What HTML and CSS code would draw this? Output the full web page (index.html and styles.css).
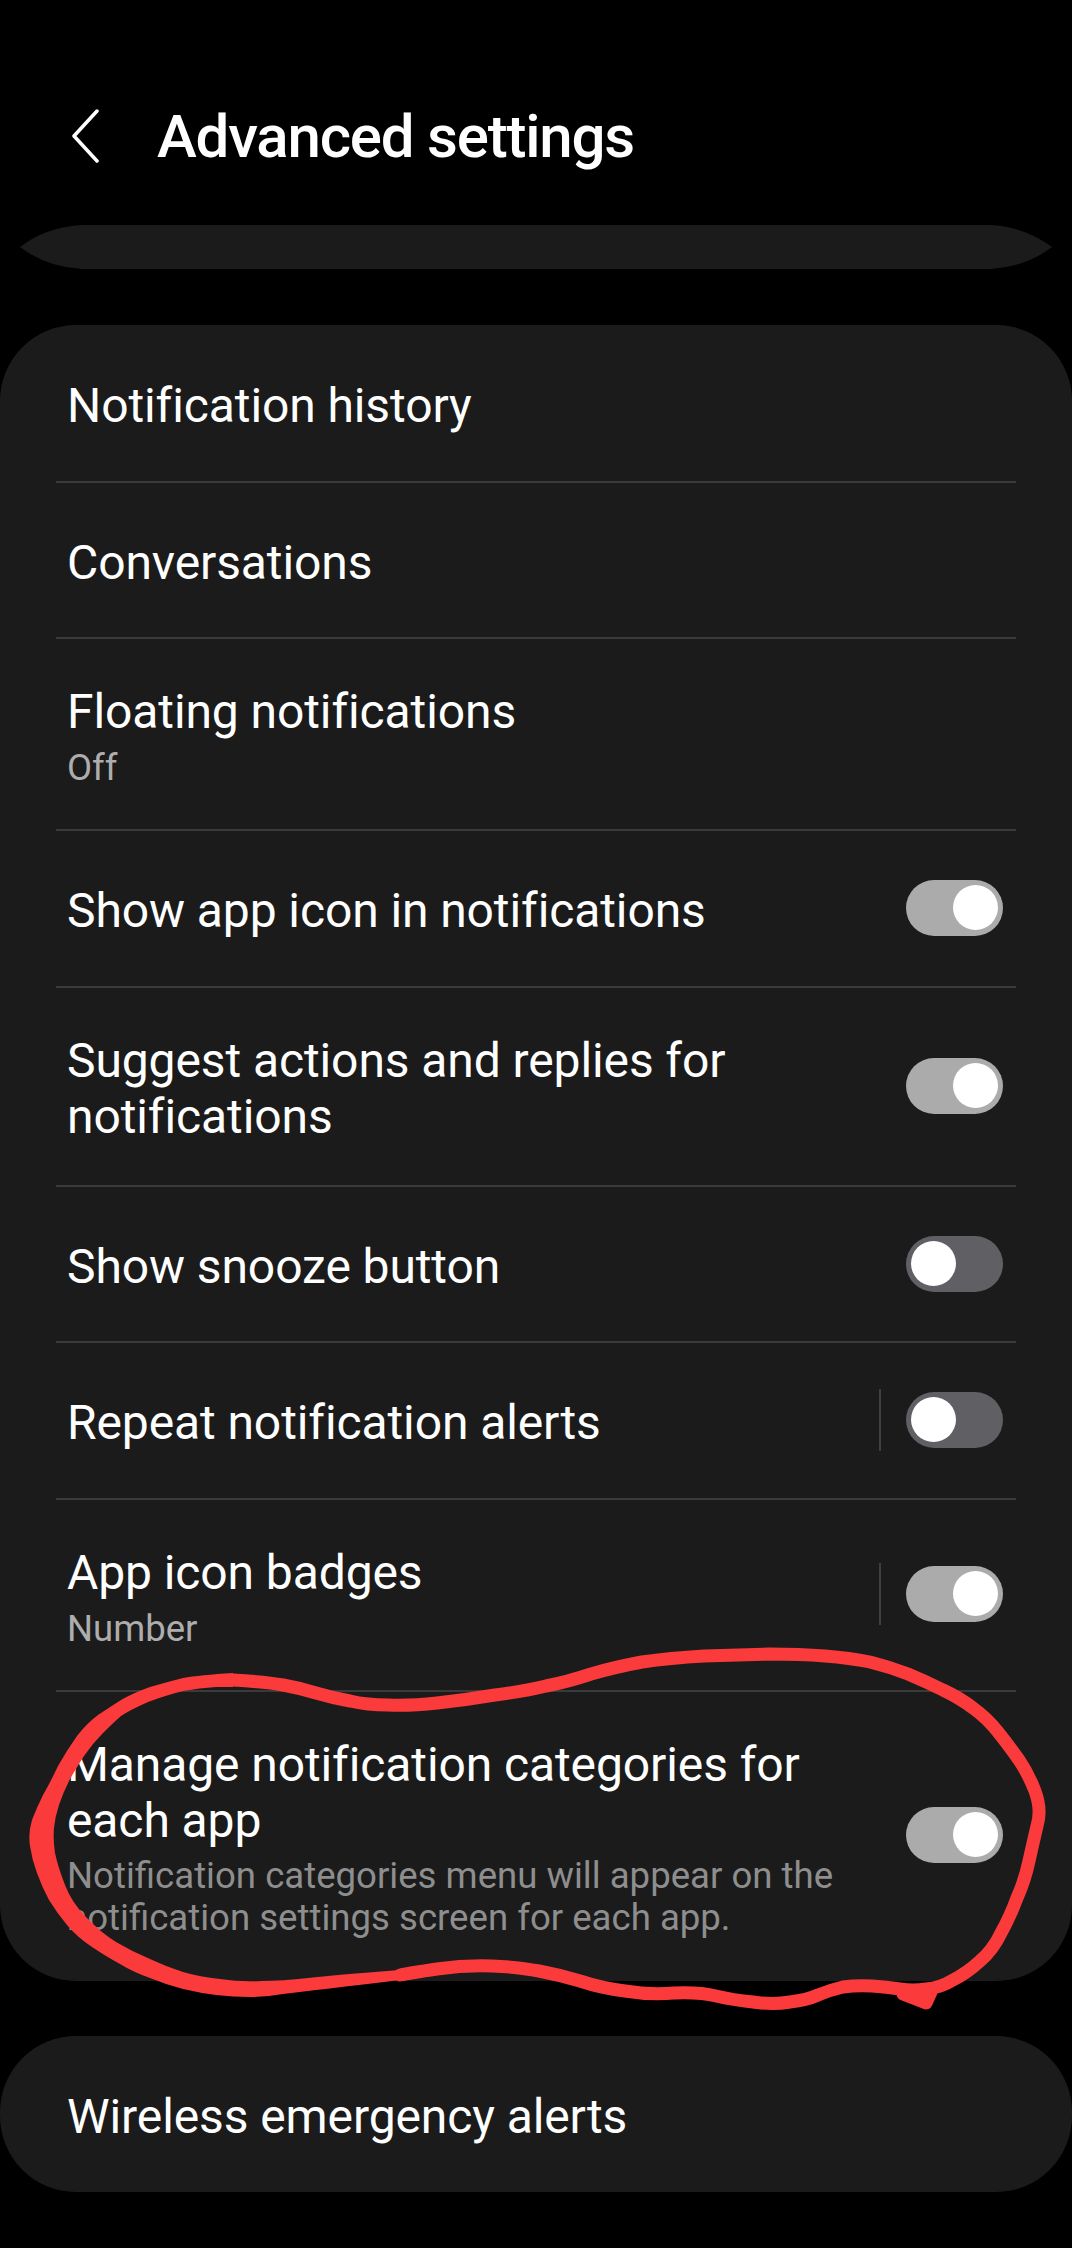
FILE: index.html
```html
<!DOCTYPE html>
<html lang="en">
<head>
    <meta charset="UTF-8">
    <title>Advanced settings</title>
    <link rel="stylesheet" href="styles.css">
</head>
<body>

<div class="screen">
    <div class="header">
        <svg class="back" width="30" height="54" viewBox="0 0 30 54">
            <path d="M27 2 L4 27 L27 52" fill="none" stroke="#fff" stroke-width="3.5" stroke-linecap="round" stroke-linejoin="round"/>
        </svg>
        <h1>Advanced settings</h1>
    </div>

    <svg class="sliver" width="1032" height="44" viewBox="0 0 1032 44">
        <path d="M0 22 Q26 2 62 0 H970 Q1006 2 1032 22 Q1006 42 970 44 H62 Q26 42 0 22 Z" fill="#1b1b1b"/>
    </svg>

    <div class="card">
        <div class="row"><div class="text"><div class="title">Notification history</div></div></div>
        <div class="row"><div class="text"><div class="title">Conversations</div></div></div>
        <div class="row row-sub">
            <div class="text">
                <div class="title">Floating notifications</div>
                <div class="sub">Off</div>
            </div>
        </div>
        <div class="row">
            <div class="text"><div class="title">Show app icon in notifications</div></div>
            <div class="toggle on"></div>
        </div>
        <div class="row">
            <div class="text"><div class="title">Suggest actions and replies for notifications</div></div>
            <div class="toggle on"></div>
        </div>
        <div class="row">
            <div class="text"><div class="title">Show snooze button</div></div>
            <div class="toggle"></div>
        </div>
        <div class="row">
            <div class="text"><div class="title">Repeat notification alerts</div></div>
            <div class="vline"></div>
            <div class="toggle"></div>
        </div>
        <div class="row row-sub">
            <div class="text">
                <div class="title">App icon badges</div>
                <div class="sub">Number</div>
            </div>
            <div class="vline"></div>
            <div class="toggle on"></div>
        </div>
        <div class="row row-sub row-desc">
            <div class="text">
                <div class="title">Manage notification categories for each app</div>
                <div class="desc">Notification categories menu will appear on the notification settings screen for each app.</div>
            </div>
            <div class="toggle on"></div>
        </div>
    </div>

    <div class="card card-last">
        <div class="row"><div class="text"><div class="title">Wireless emergency alerts</div></div></div>
    </div>

    <!-- red marker circled by hand over the screenshot -->
    <svg class="marker" viewBox="0 0 1072 2248">
        <path class="marker-line" d="M233,1680 Q267,1682 283,1685 Q300,1688 316,1693 Q333,1698 350,1701 Q367,1705 388,1705 Q410,1706 437,1703 Q465,1700 495,1695 Q526,1691 546,1686 Q567,1682 591,1674 Q615,1667 642,1662 Q670,1658 704,1656 Q738,1655 769,1654 Q800,1654 825,1656 Q850,1658 870,1662 Q890,1667 908,1674 Q927,1682 943,1690 Q960,1698 973,1708 Q987,1718 998,1732 Q1010,1747 1019,1760 Q1028,1773 1035,1791 Q1042,1810 1037,1826 Q1033,1843 1029,1861 Q1025,1880 1017,1898 Q1010,1917 1001,1933 Q993,1950 980,1961 Q967,1973 953,1980 Q940,1988 926,1989 Q913,1991 900,1989 Q887,1987 872,1986 Q857,1985 843,1987 Q830,1990 818,1995 Q807,2000 790,2002 Q773,2005 753,2002 Q733,2000 716,1996 Q700,1992 674,1993 Q649,1995 625,1991 Q601,1988 580,1981 Q560,1975 539,1971 Q519,1967 492,1966 Q465,1965 437,1969 Q410,1973 400,1975"/>
        <path class="marker-line" d="M903,1994 L926,2003 L931,1992"/>
        <path class="marker-fill" d="M233,1673 Q200,1675 183,1678 Q167,1682 150,1687 Q133,1693 121,1700 Q110,1707 98,1715 Q87,1723 77,1736 Q67,1750 58,1766 Q50,1783 43,1795 Q37,1807 32,1820 Q28,1833 30,1846 Q32,1860 37,1873 Q42,1887 49,1900 Q57,1913 67,1925 Q77,1937 92,1947 Q107,1957 120,1964 Q133,1972 150,1978 Q167,1985 183,1989 Q200,1993 216,1995 Q233,1997 250,1997 Q267,1997 283,1994 Q300,1992 316,1990 Q333,1988 400,1980 L400,1970 Q333,1975 308,1978 Q283,1981 261,1981 Q240,1982 220,1979 Q200,1977 183,1972 Q167,1967 150,1959 Q133,1952 116,1942 Q100,1932 86,1917 Q72,1903 65,1885 Q58,1867 55,1853 Q53,1840 54,1828 Q55,1817 59,1805 Q63,1793 69,1781 Q75,1770 84,1756 Q93,1743 103,1733 Q113,1723 121,1716 Q130,1710 148,1702 Q167,1695 183,1691 Q200,1688 216,1687 L233,1687 Z"/>
    </svg>
</div>

</body>
</html>
```

FILE: styles.css
```css
/* page */
body {
    margin: 0;
    background-color: #000000;
    font-family: Roboto, "Liberation Sans", sans-serif;
    color: #ffffff;
}

.screen {
    position: relative;
    width: 1072px;
    height: 2248px;
    overflow: hidden;
}

/* header */
.header {
    display: flex;
    align-items: center;
    height: 225px;
    box-sizing: border-box;
    padding: 47px 0 0 70px;
}

.back {
    margin-right: 57px;
}

h1 {
    margin: 0;
    font-size: 60px;
    font-weight: 500;
    letter-spacing: -1.2px;
}

/* the piece of a card scrolled away under the header */
.sliver {
    display: block;
    margin: 0 20px 56px;
}

/* cards */
.card {
    background-color: #1b1b1b;
    border-radius: 76px;
    padding: 1px 56px 0;
}

.card-last {
    margin-top: 55px;
    padding-top: 0;
}

.row {
    display: flex;
    align-items: center;
    min-height: 156.5px;
    box-sizing: border-box;
    padding: 45.5px 13px 39.5px 11px;
    border-bottom: 2px solid #3a3a3a;
}

.row-sub {
    padding-top: 45px;
    padding-bottom: 40px;
}

.row-desc {
    padding-bottom: 41.5px;
}

.row:last-child {
    border-bottom: none;
}

.text {
    flex: 1;
    min-width: 0;
    padding-right: 50px;
}

.title {
    font-size: 48px;
    line-height: 56px;
    letter-spacing: -0.1px;
}

.sub {
    margin-top: 7px;
    font-size: 36.5px;
    line-height: 42px;
    color: #adadad;
}

.desc {
    margin-top: 6.5px;
    font-size: 36.6px;
    line-height: 42px;
    color: #8e8e8e;
}

/* switches */
.toggle {
    position: relative;
    flex: none;
    width: 97px;
    height: 56px;
    margin-top: -6px;
    border-radius: 28px;
    background-color: #5f5f64;
}

.toggle::after {
    content: "";
    position: absolute;
    top: 5px;
    left: 5px;
    width: 45px;
    height: 45px;
    border-radius: 50%;
    background-color: #ffffff;
}

.toggle.on {
    background-color: #ababab;
}

.toggle.on::after {
    left: 47px;
}

.vline {
    flex: none;
    width: 2px;
    height: 62px;
    margin-top: -6px;
    margin-right: 25px;
    background-color: #3f3f3f;
}

/* red marker */
.marker {
    position: absolute;
    top: 0;
    left: 0;
    width: 1072px;
    height: 2248px;
}

.marker-line {
    fill: none;
    stroke: #fb3a3c;
    stroke-width: 13px;
    stroke-linejoin: round;
    stroke-linecap: round;
}

.marker-fill {
    fill: #fb3a3c;
}
```
